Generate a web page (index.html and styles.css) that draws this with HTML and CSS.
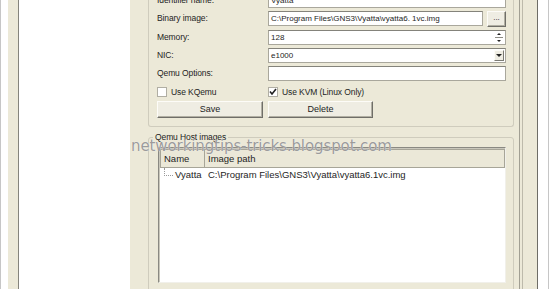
FILE: index.html
```html
<!DOCTYPE html>
<html lang="en">
<head>
  <meta charset="UTF-8">
  <title>Qemu Host images</title>
  <link rel="stylesheet" href="styles.css">
</head>
<body>

  <div class="screen">
    <div class="edge-left"></div>
    <div class="frame-left"></div>
    <div class="tree-pane"></div>

    <div class="main">
      <!-- settings of the selected image -->
      <div class="group-top">
        <div class="form">
          <div class="label">Identifier name:</div>
          <div class="field">Vyatta</div>

          <div class="label">Binary image:</div>
          <div class="field-row">
            <div class="field">C:\Program Files\GNS3\Vyatta\vyatta6. 1vc.img</div>
            <div class="btn btn-browse">...</div>
          </div>

          <div class="label">Memory:</div>
          <div class="field field-spin">
            <span class="field-text">128</span>
            <span class="spin">
              <span class="arrow-up"></span>
              <span class="spin-sep"></span>
              <span class="arrow-down"></span>
            </span>
          </div>

          <div class="label">NIC:</div>
          <div class="field field-combo">
            <span class="field-text">e1000</span>
            <span class="combo-btn"><span class="arrow-down"></span></span>
          </div>

          <div class="label">Qemu Options:</div>
          <div class="field"></div>
        </div>

        <div class="checks">
          <div class="check">
            <span class="check-box"></span>
            <span>Use KQemu</span>
          </div>
          <div class="check">
            <span class="check-box">
              <svg width="8" height="8" viewBox="0 0 8 8"><polyline points="1,3.5 3,6 7,1" fill="none" stroke="#222" stroke-width="1.6"/></svg>
            </span>
            <span>Use KVM (Linux Only)</span>
          </div>
        </div>

        <div class="buttons">
          <div class="btn btn-save">Save</div>
          <div class="btn btn-delete">Delete</div>
        </div>
      </div>

      <!-- list of images -->
      <fieldset class="group-images">
        <legend>Qemu Host images</legend>
        <div class="listview">
          <div class="lv-header">
            <div class="lv-col lv-col-name">Name</div>
            <div class="lv-col lv-col-path">Image path</div>
          </div>
          <div class="lv-row">
            <div class="lv-cell-name"><span class="tree-line"></span>Vyatta</div>
            <div class="lv-cell-path">C:\Program Files\GNS3\Vyatta\vyatta6.1vc.img</div>
          </div>
        </div>
      </fieldset>
    </div>

    <div class="frame-right"></div>
    <div class="edge-right"></div>

    <div class="watermark">networkingtips-tricks.blogspot.com</div>
  </div>

</body>
</html>
```

FILE: styles.css
```css
body {
  margin: 0;
  background: #fff;
  font-family: "Liberation Sans", Arial, sans-serif;
  color: #1e1e1e;
}

.screen {
  display: flex;
  height: 289px;
  overflow: hidden;
  position: relative;
}

.edge-left {
  width: 7px;
  border-left: 1px solid #c6c6c6;
}

.frame-left {
  width: 10px;
  background: #ece9d8;
  border-right: 1px solid #85847c;
}

.tree-pane {
  width: 111px;
  background: #fff;
}

.main {
  width: 366px;
  padding: 0 5px 0 18px;
  background: #ece9d8;
  border-right: 1px solid #a19f93;
}

.frame-right {
  width: 17px;
  background: linear-gradient(to right, #ece9d8 0 2px, #bdbaab 2px 3px, #ece9d8 3px);
  border-right: 1px solid #6e6d66;
}

.edge-right {
  width: 10px;
  border-right: 1px solid #c6c6c6;
}

/* top group box */
.group-top {
  margin-top: -7px;
  padding: 0 7px 8px 8px;
  border: 1px solid #cfccbd;
  border-top: 0;
  border-radius: 0 0 3px 3px;
}

.form {
  display: grid;
  grid-template-columns: 111px 1fr;
  row-gap: 3px;
  align-items: start;
}

.label {
  font-size: 8.5px;
  line-height: 15px;
  letter-spacing: -0.1px;
}

.field {
  height: 13px;
  border: 1px solid #a9a79c;
  border-top-color: #84837b;
  background: #fff;
  font-size: 8px;
  line-height: 13px;
  padding-left: 2px;
  white-space: nowrap;
  overflow: hidden;
}

.field-row {
  display: flex;
  gap: 4px;
}

.field-row .field {
  flex: 1;
}

.field-spin,
.field-combo {
  display: flex;
  align-items: center;
  padding-right: 1px;
}

.field-text {
  flex: 1;
}

.spin {
  width: 10px;
  height: 11px;
  display: flex;
  flex-direction: column;
  align-items: center;
  justify-content: space-between;
  padding: 1px 0;
  box-sizing: border-box;
}

.spin-sep {
  width: 8px;
  border-top: 1px solid #8c8b84;
}

.arrow-up {
  width: 0;
  height: 0;
  border-left: 2px solid transparent;
  border-right: 2px solid transparent;
  border-bottom: 2px solid #222;
}

.arrow-down {
  width: 0;
  height: 0;
  border-left: 2px solid transparent;
  border-right: 2px solid transparent;
  border-top: 2px solid #222;
}

.combo-btn {
  width: 10px;
  height: 11px;
  display: flex;
  align-items: center;
  justify-content: center;
  background: #efede3;
  border: 1px solid;
  border-color: #fdfcf8 #7b7a73 #7b7a73 #fdfcf8;
  box-sizing: border-box;
}

.combo-btn .arrow-down {
  border-left-width: 3px;
  border-right-width: 3px;
  border-top-width: 3px;
}

/* buttons */
.btn {
  background: #efede3;
  border: 1px solid;
  border-color: #fdfcf8 #6f6e68 #6f6e68 #fdfcf8;
  box-shadow: inset -1px -1px 0 #b1afa3;
  font-size: 8.5px;
  text-align: center;
  box-sizing: border-box;
}

.btn-browse {
  width: 19px;
  height: 16px;
  line-height: 12px;
  font-size: 8px;
}

.checks {
  display: grid;
  grid-template-columns: 111px 1fr;
  margin-top: 5px;
  height: 12px;
  align-items: center;
}

.check {
  display: flex;
  align-items: center;
  gap: 4px;
  font-size: 8.5px;
  letter-spacing: -0.1px;
}

.check-box {
  width: 10px;
  height: 10px;
  box-sizing: border-box;
  border: 1px solid #b0aea3;
  background: #fff;
  display: flex;
  align-items: center;
  justify-content: center;
}

.buttons {
  display: grid;
  grid-template-columns: 106px 105px;
  column-gap: 5px;
  margin-top: 3px;
}

.btn-save,
.btn-delete {
  height: 17px;
  line-height: 15px;
  font-size: 9px;
}

/* lower group box */
.group-images {
  margin: 5px 0 0;
  padding: 0 7px 10px 9px;
  border: 1px solid #cfccbd;
  border-radius: 3px;
  min-width: 0;
}

.group-images legend {
  margin-left: -5px;
  padding: 0 2px;
  font-size: 8.5px;
  line-height: 11px;
  letter-spacing: -0.1px;
}

.listview {
  margin-top: 4px;
  height: 134px;
  background: #fff;
  border: 1px solid;
  border-color: #8a8982 #f1f0ea #f1f0ea #8a8982;
  box-shadow: inset 1px 1px 0 #c9c7bb;
}

.lv-header {
  display: flex;
  height: 17px;
  margin: 1px 0 0 1px;
  background: #ebe8d8;
  border: 1px solid #a7a598;
  font-size: 9.5px;
  line-height: 17px;
}

.lv-col {
  padding-left: 3px;
  box-sizing: border-box;
}

.lv-col-name {
  width: 44px;
  border-right: 1px solid #a7a598;
}

.lv-col-path {
  flex: 1;
}

.lv-row {
  display: flex;
  height: 14px;
  font-size: 9.5px;
  line-height: 14px;
}

.lv-cell-name {
  width: 46px;
  display: flex;
  align-items: flex-start;
}

.tree-line {
  width: 8px;
  height: 7px;
  margin: 0 2px 0 5px;
  border-left: 1px dotted #9a9a9a;
  border-bottom: 1px dotted #9a9a9a;
}

.lv-cell-path {
  padding-left: 3px;
  white-space: nowrap;
}

.watermark {
  position: absolute;
  left: 131px;
  top: 139px;
  font-family: "DejaVu Sans", sans-serif;
  font-size: 15px;
  line-height: 15px;
  letter-spacing: -0.1px;
  color: #9b9b9b;
  text-shadow: 0 0 1px #fff;
}
```
